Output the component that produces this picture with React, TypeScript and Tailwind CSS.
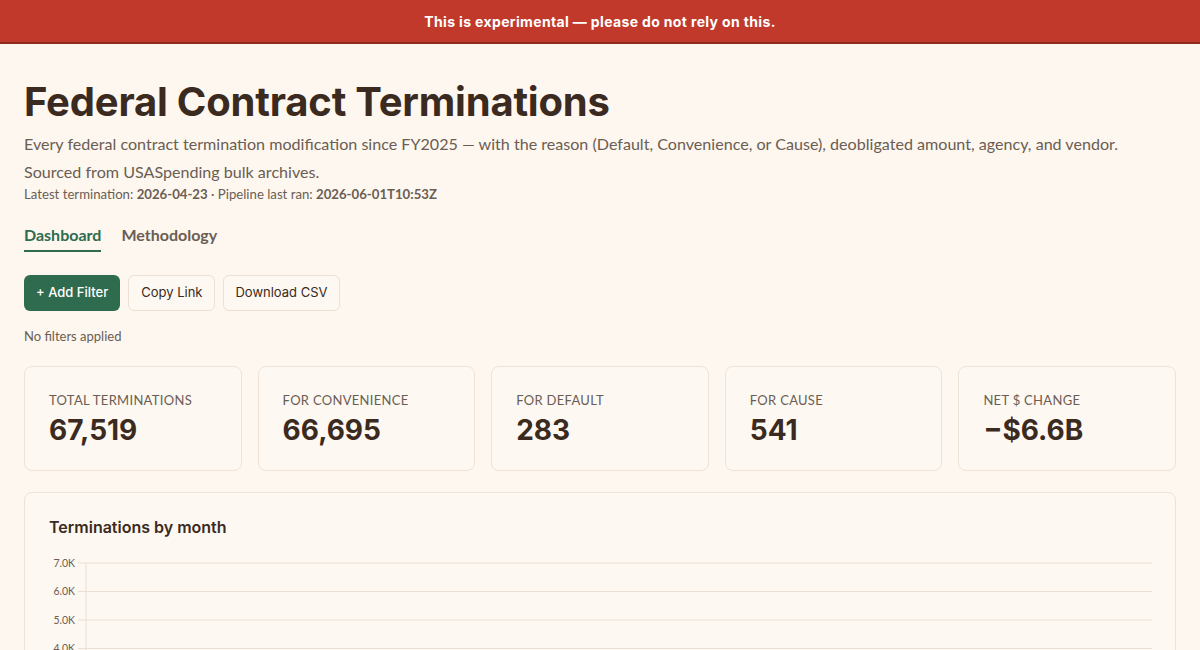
import React from "react";

const head = { fontFamily: "Inter, 'Noto Sans', sans-serif" };
const body = { fontFamily: "Lato, 'Noto Sans', sans-serif" };

const stats = [
  { label: "Total Terminations", value: "67,519" },
  { label: "For Convenience", value: "66,695" },
  { label: "For Default", value: "283" },
  { label: "For Cause", value: "541" },
  { label: "Net $ Change", value: "−$6.6B" },
];

function MonthChart() {
  const ticks = ["7.0K", "6.0K", "5.0K", "4.0K", "3.0K"];
  const top = 10;
  const step = 28.5;
  return (
    <svg width="1104" height="140" className="block">
      {ticks.map((t, i) => {
        const y = top + i * step;
        return (
          <g key={t}>
            <text x="26" y={y + 3.5} textAnchor="end" fontSize="10.5" fill="#6b5d52" fontFamily="Lato, sans-serif">
              {t}
            </text>
            <line x1="29" x2="1103" y1={y} y2={y} stroke="#ebe0d3" strokeWidth="1" />
          </g>
        );
      })}
      <line x1="37" x2="37" y1={top} y2="140" stroke="#ebe0d3" strokeWidth="1" />
    </svg>
  );
}

export default function App() {
  return (
    <div className="min-h-screen bg-[#fdf7f0] text-[#3b2a20]" style={body}>
      <div className="bg-[#c0392b] border-b-2 border-[#8f2a20] h-[44px] flex items-center justify-center">
        <span className="text-white text-[14px] font-bold tracking-[0.35px]" style={head}>
          This is experimental — please do not rely on this.
        </span>
      </div>

      <div className="px-6 pt-[34px]">
        <h1 className="text-[40px] leading-[48px] font-bold tracking-[-0.2px]" style={head}>
          Federal Contract Terminations
        </h1>
        <p className="mt-[4px] text-[16.1px] leading-[28px] text-[#6b5d52]">
          Every federal contract termination modification since FY2025 — with the reason (Default, Convenience, or Cause), deobligated amount, agency, and vendor.
        </p>
        <p className="text-[16.1px] leading-[28px] text-[#6b5d52]">Sourced from USASpending bulk archives.</p>
        <p className="text-[13.2px] leading-[16px] text-[#6b5d52]">
          Latest termination: <b className="font-bold">2026-04-23</b> · Pipeline last ran:{" "}
          <b className="font-bold">2026-06-01T10:53Z</b>
        </p>

        <div className="mt-[21px] flex gap-5 text-[16px] font-bold">
          <span className="text-[#2f6b4f] border-b-2 border-[#2f6b4f] pb-[3px]">Dashboard</span>
          <span className="text-[#6b5d52]">Methodology</span>
        </div>

        <div className="mt-[23px] flex gap-2 text-[13px]" style={head}>
          <button className="h-[36px] px-[12px] rounded-md bg-[#2f6b4f] text-white font-medium">+ Add Filter</button>
          <button className="h-[36px] px-[12px] rounded-md border border-[#ebe1d5] bg-[#fdf8f2] text-[#3b2a20]">Copy Link</button>
          <button className="h-[36px] px-[11px] rounded-md border border-[#ebe1d5] bg-[#fdf8f2] text-[#3b2a20]">Download CSV</button>
        </div>

        <p className="mt-[16px] text-[13px] text-[#6b5d52]">No filters applied</p>

        <div className="mt-[19px] grid grid-cols-5 gap-4">
          {stats.map((s) => (
            <div key={s.label} className="h-[105px] rounded-lg border border-[#ede3d7] bg-[#fdf8f2] px-6 pt-[25px]">
              <div className="text-[13px] uppercase tracking-[0.3px] text-[#6b5d52] leading-[16px]">{s.label}</div>
              <div className="mt-[5px] text-[28px] font-bold leading-[34px]" style={head}>{s.value}</div>
            </div>
          ))}
        </div>

        <div className="mt-[21px] rounded-lg border border-[#ede3d7] bg-[#fdf8f2] px-6 pt-[24px]">
          <h2 className="text-[16px] font-semibold leading-[20px]" style={head}>Terminations by month</h2>
          <div className="mt-[16px]">
            <MonthChart />
          </div>
        </div>
      </div>
    </div>
  );
}
